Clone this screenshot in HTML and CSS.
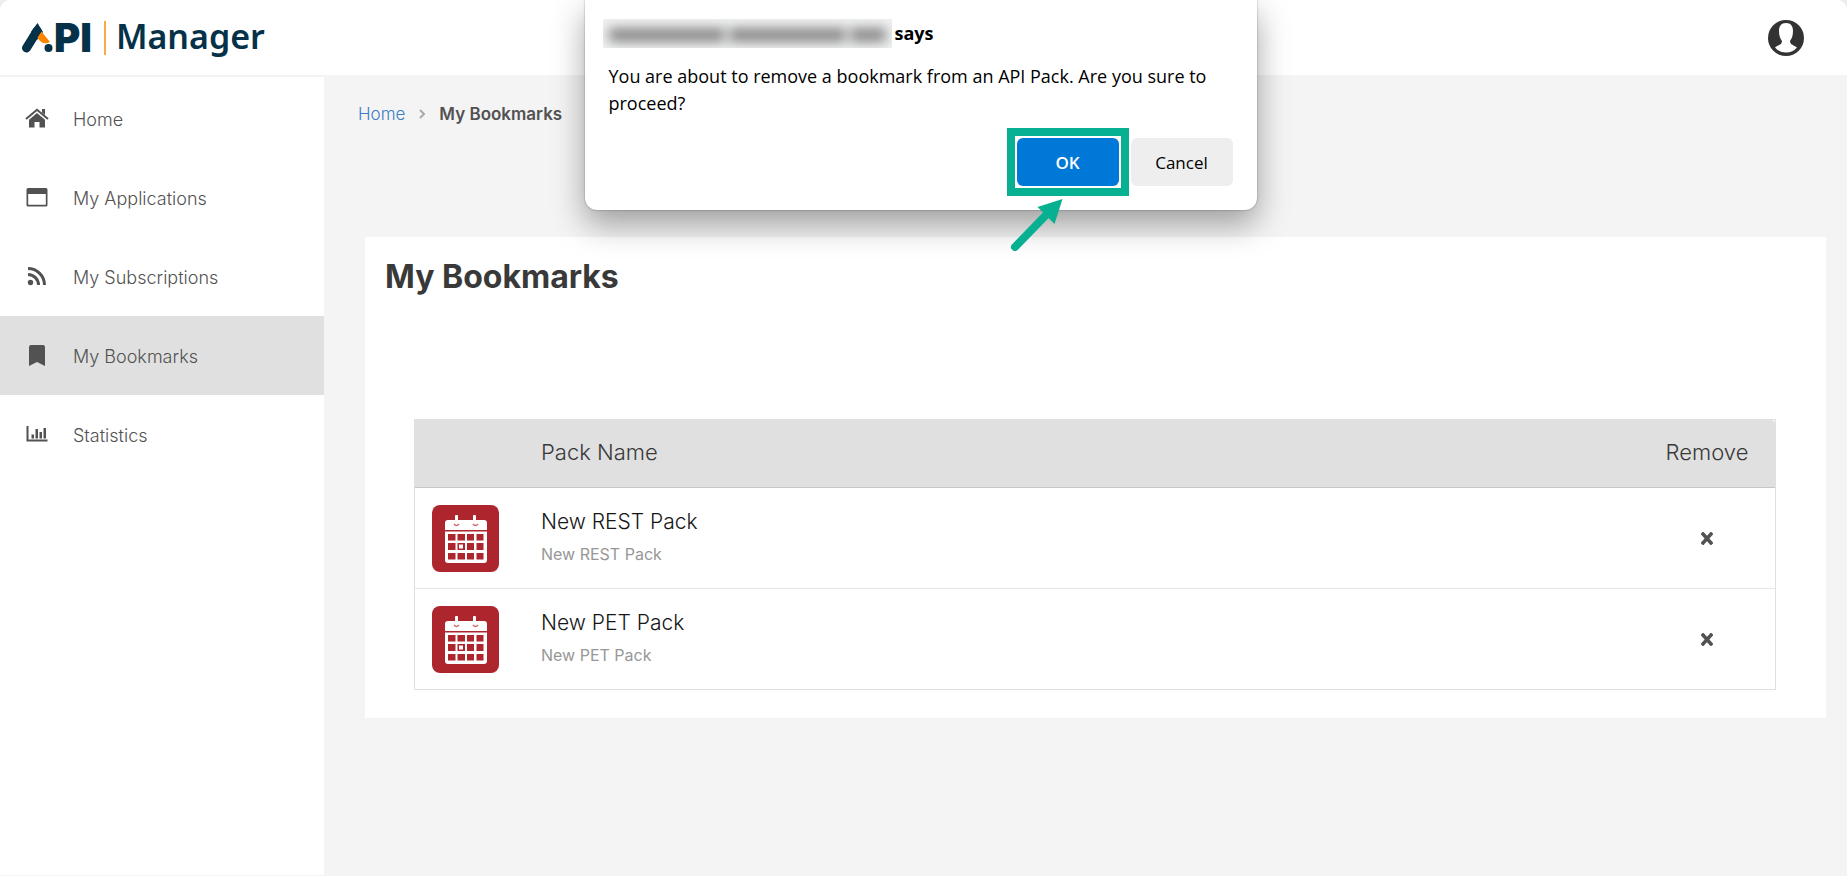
FILE: index.html
```html
<!DOCTYPE html>
<html lang="en">
<head>
<meta charset="utf-8">
<meta name="viewport" content="width=device-width, initial-scale=1">
<title>My Bookmarks - API Manager</title>
<link rel="stylesheet" href="styles.css">
</head>
<body>
<svg class="defs" aria-hidden="true">
  <symbol id="calendar" viewBox="0 0 67 67">
    <rect width="67" height="67" rx="8" fill="#ad252d"/>
    <rect x="23" y="10" width="3" height="9" rx="1" fill="#fff"/>
    <rect x="41" y="10" width="3" height="9" rx="1" fill="#fff"/>
    <path d="M16 15h36q3 0 3 3v7H13v-7q0-3 3-3z" fill="#fff"/>
    <path d="M22 19q2.500 3 5 0M41 19q2.500 3 5 0" fill="none" stroke="#d06a70" stroke-width="1.500"/>
    <path d="M13 26.500h42V55q0 3-3 3H16q-3 0-3-3z" fill="#fff"/>
    <path d="M16 29h7.500v6.500H16zM25.500 29H33v6.500h-7.500zM35 29h7v6.500h-7zM44.500 29h7v6.500h-7zM16 38h7.500v7H16zM25.500 38H33v7h-7.500zM35 38h7v7h-7zM44.500 38h7v7h-7zM16 48h7.500v6.500H16zM25.500 48H33v6.500h-7.500zM35 48h7v6.500h-7zM44.500 48h7v6.500h-7z" fill="#ad252d"/>
    <rect x="27" y="39.500" width="4" height="4" fill="#fff"/>
  </symbol>
</svg>

<div class="page">
  <header class="topbar">
    <a class="brand" href="#" aria-label="API Manager">
      <svg class="brand-mark" width="32" height="30" viewBox="0 0 32 30" aria-hidden="true">
        <path d="M4.500 25 15 8" stroke="#053149" stroke-width="9" stroke-linecap="round"/>
        <path d="M15.500 0 21 9 15 17 9 9z" fill="#053149"/>
        <path d="M19.500 8.500 28 19Q20 23 15.500 14.500z" fill="#fb8500"/>
        <circle cx="26.500" cy="25" r="4" fill="#053149"/>
      </svg>
      <span class="brand-api">PI</span>
      <span class="brand-rule"></span>
      <span class="brand-name">Manager</span>
    </a>
    <button class="avatar" type="button" aria-label="Account">
      <svg width="36" height="36" viewBox="0 0 36 36" aria-hidden="true">
        <circle cx="18" cy="18" r="18" fill="#333"/>
        <path d="M18 3c5 0 7 3.500 7 8 0 5-1.500 8-3 10 0 4 4 4 7 6.500Q25 32.500 18 32.500T7 27.500c3-2.500 7-2.500 7-6.500-1.500-2-3-5-3-10 0-4.500 2-8 7-8z" fill="#fff"/>
      </svg>
    </button>
  </header>

  <div class="layout">
    <nav class="sidebar" aria-label="Main">
      <a class="nav-item" href="#">
        <svg class="nav-icon" viewBox="0 0 24 24"><path d="M12 6 20 12.800V20.500h-5.500V15h-5v5.500H4V12.800z"/><path d="M1 12 12 2.800 23 12" fill="none" stroke="#525252" stroke-width="2"/><path d="M17 2h3v6l-3-2.500z"/></svg>
        <span>Home</span>
      </a>
      <a class="nav-item" href="#">
        <svg class="nav-icon" viewBox="0 0 24 24"><path fill-rule="evenodd" d="M3 2h18q1.500 0 1.500 1.500v15.500q0 1.500-1.500 1.500H3q-1.500 0-1.500-1.500V3.500Q1.500 2 3 2zM3.200 8v10.800h17.600V8z"/></svg>
        <span>My Applications</span>
      </a>
      <a class="nav-item" href="#">
        <svg class="nav-icon" viewBox="0 0 24 24"><circle cx="5.500" cy="17.500" r="2.700"/><path d="M3 9.500A10.500 10.500 0 0 1 13.500 20M3 3.500A16.500 16.500 0 0 1 19.500 20" fill="none" stroke="#525252" stroke-width="3"/></svg>
        <span>My Subscriptions</span>
      </a>
      <a class="nav-item nav-item-active" href="#" aria-current="page">
        <svg class="nav-icon" viewBox="0 0 24 24"><path d="M6 1h12q2 0 2 2v19l-8-4-8 4V3q0-2 2-2z"/></svg>
        <span>My Bookmarks</span>
      </a>
      <a class="nav-item" href="#">
        <svg class="nav-icon" viewBox="0 0 24 24"><path d="M1.500 3h2v13.500h19v2h-21zM6.500 11.500H9v4H6.500zM10.500 6H13v9.500h-2.500zM14.500 9H17v6.500h-2.500zM18.500 5H21v10.500h-2.500z"/></svg>
        <span>Statistics</span>
      </a>
    </nav>

    <main class="content">
      <nav class="crumbs" aria-label="Breadcrumb">
        <a href="#">Home</a>
        <svg width="6" height="10" viewBox="0 0 6 10" aria-hidden="true"><path d="M1 1l4 4-4 4" fill="none" stroke="#aaa" stroke-width="2"/></svg>
        <span class="crumb-current">My Bookmarks</span>
      </nav>

      <section class="card">
        <h1>My Bookmarks</h1>
        <table class="packs">
          <thead>
            <tr><th class="col-icon"></th><th>Pack Name</th><th class="col-remove">Remove</th></tr>
          </thead>
          <tbody>
            <tr>
              <td class="col-icon"><svg class="pack-icon"><use href="#calendar"/></svg></td>
              <td><div class="pack-name">New REST Pack</div><div class="pack-note">New REST Pack</div></td>
              <td class="col-remove"><button class="remove" type="button" aria-label="Remove New REST Pack"><svg width="12" height="13" viewBox="0 0 12 13"><path d="M2 2 10 11M10 2 2 11" stroke="#525252" stroke-width="3.500"  stroke-linecap="square"/></svg></button></td>
            </tr>
            <tr>
              <td class="col-icon"><svg class="pack-icon"><use href="#calendar"/></svg></td>
              <td><div class="pack-name">New PET Pack</div><div class="pack-note">New PET Pack</div></td>
              <td class="col-remove"><button class="remove" type="button" aria-label="Remove New PET Pack"><svg width="12" height="13" viewBox="0 0 12 13"><path d="M2 2 10 11M10 2 2 11" stroke="#525252" stroke-width="3.500"  stroke-linecap="square"/></svg></button></td>
            </tr>
          </tbody>
        </table>
      </section>
    </main>
  </div>
</div>

<div class="dialog" role="alertdialog" aria-labelledby="dialog-title" aria-describedby="dialog-text">
  <div class="dialog-title" id="dialog-title">
    <span class="redacted" aria-hidden="true"><i></i><i></i><i></i></span>
    <span>says</span>
  </div>
  <p class="dialog-text" id="dialog-text">You are about to remove a bookmark from an API Pack. Are you sure to proceed?</p>
  <div class="dialog-actions">
    <div class="ok-wrap">
      <button class="btn btn-primary" type="button">OK</button>
      <span class="highlight"></span>
      <svg class="arrow" width="54" height="54" viewBox="0 0 54 54" aria-hidden="true">
        <path d="M5 49 39 14" stroke="#08b092" stroke-width="8" stroke-linecap="round"/>
        <path d="M52.500 1 27.500 9 44.500 26z" fill="#08b092"/>
      </svg>
    </div>
    <button class="btn" type="button">Cancel</button>
  </div>
</div>
</body>
</html>
```

FILE: styles.css
```css
* {
  box-sizing: border-box;
}

body {
  margin: 0;
  min-height: 100vh;
  background: #ededed;
  color: #525252;
  font-family: Inter, "Open Sans", sans-serif;
}

a {
  color: inherit;
  text-decoration: none;
}

button {
  font: inherit;
  cursor: pointer;
}

.defs {
  display: none;
}

.page {
  display: flex;
  flex-direction: column;
  min-height: 100vh;
  overflow: hidden;
  border-radius: 10px 10px 0 0;
  background: #f4f4f4;
}

/* Header */

.topbar {
  display: flex;
  align-items: center;
  justify-content: space-between;
  height: 75px;
  padding: 0 43px 0 22px;
  background: #fff;
}

.brand {
  display: flex;
  align-items: center;
  color: #053149;
}

.brand-api {
  font-size: 40px;
  font-weight: 900;
  line-height: 48px;
}

.brand-rule {
  width: 2px;
  height: 34px;
  margin: 0 10px 0 12px;
  background: #fda94b;
}

.brand-name {
  padding-bottom: 4px;
  font-family: "Noto Sans", sans-serif;
  font-size: 34px;
  font-weight: 600;
  line-height: 48px;
}

.avatar {
  display: block;
  padding: 0;
  border: 0;
  background: none;
  line-height: 0;
}

/* Page columns */

.layout {
  display: flex;
  flex: 1;
}

.sidebar {
  flex: 0 0 324px;
  padding-top: 2px;
  border-top: 2px solid #f3f3f3;
  border-bottom: 1px solid #f3f3f3;
  background: #fff;
}

.nav-item {
  display: flex;
  align-items: center;
  gap: 24px;
  height: 79px;
  padding-left: 25px;
  font-size: 18px;
  font-weight: 300;
}

.nav-item span {
  padding-top: 2px;
}

.nav-item-active {
  background: #e0e0e0;
}

.nav-icon {
  width: 24px;
  height: 24px;
  fill: #525252;
}

.content {
  flex: 1;
  min-width: 0;
  padding: 25px 21px 0 34px;
}

.crumbs {
  display: flex;
  align-items: center;
  gap: 14px;
  height: 28px;
  font-size: 17px;
}

.crumbs a {
  color: #3d7cc9;
  font-weight: 300;
}

.crumb-current {
  font-weight: 600;
}

/* Bookmarks card */

.card {
  margin: 109px 0 0 7px;
  padding: 16px 50px 28px 49px;
  background: #fff;
}

.card h1 {
  margin: 0 0 118px -29px;
  color: #393939;
  font-size: 32px;
  font-weight: 700;
  line-height: 48px;
}

.packs {
  width: 100%;
  border: 1px solid #e0e0e0;
  border-collapse: separate;
  border-spacing: 0;
}

.packs th,
.packs td {
  padding: 0;
  text-align: left;
}

.packs th {
  height: 68px;
  padding-bottom: 4px;
  border-bottom: 1px solid #c6c6c6;
  background: #e0e0e0;
  color: #393939;
  font-size: 22px;
  font-weight: 300;
}

.packs th:last-child {
  border-top-right-radius: 4px;
}

.packs td {
  height: 100px;
}

.packs tbody tr + tr td {
  height: 101px;
  border-top: 1px solid #e6e6e6;
}

.packs .col-icon {
  width: 126px;
  padding-left: 17px;
}

.packs .col-remove {
  width: 136px;
  text-align: center;
}

.pack-icon {
  display: block;
  width: 67px;
  height: 67px;
}

.pack-name {
  color: #161616;
  font-size: 21px;
  font-weight: 300;
  line-height: 32px;
}

.pack-note {
  color: #979797;
  font-size: 16px;
  line-height: 32px;
}

.remove {
  padding: 4px;
  border: 0;
  background: none;
  line-height: 0;
}

/* Browser confirmation */

.dialog {
  position: absolute;
  top: 0;
  left: calc(50% - 339px);
  width: 672px;
  padding: 19px 24px 24px;
  border-radius: 0 0 12px 12px;
  background: #fff;
  box-shadow: 0 0 2px rgba(0, 0, 0, 0.4), 0 14px 32px rgba(0, 0, 0, 0.36);
  color: #000;
  font-family: "Open Sans", "Noto Sans", sans-serif;
  font-size: 18px;
}

.dialog-title {
  display: flex;
  align-items: center;
  gap: 3px;
  margin-left: -6px;
  font-weight: 700;
  line-height: 29px;
}

.redacted {
  display: flex;
  align-items: center;
  gap: 4px;
  width: 289px;
  height: 29px;
  padding: 2px 6px 0;
  overflow: hidden;
  background: #f0f1f1;
}

.redacted i {
  flex: 10;
  height: 14px;
  background: #888;
  filter: blur(6px);
}

.redacted i:last-child {
  flex: 3;
}

.dialog-text {
  margin: 15px 0 21px;
  line-height: 27px;
}

.dialog-actions {
  display: flex;
  justify-content: flex-end;
  gap: 12px;
}

.ok-wrap {
  position: relative;
}

.btn {
  width: 102px;
  height: 48px;
  border: 0;
  border-radius: 6px;
  background: #eee;
  color: #000;
  font-size: 17px;
  font-weight: 500;
}

.btn-primary {
  background: #0078d7;
  color: #fff;
  font-weight: 600;
}

.highlight {
  position: absolute;
  inset: -10px;
  border: 8px solid #08b092;
  pointer-events: none;
}

.arrow {
  position: absolute;
  top: 60px;
  left: -7px;
  pointer-events: none;
}
```
